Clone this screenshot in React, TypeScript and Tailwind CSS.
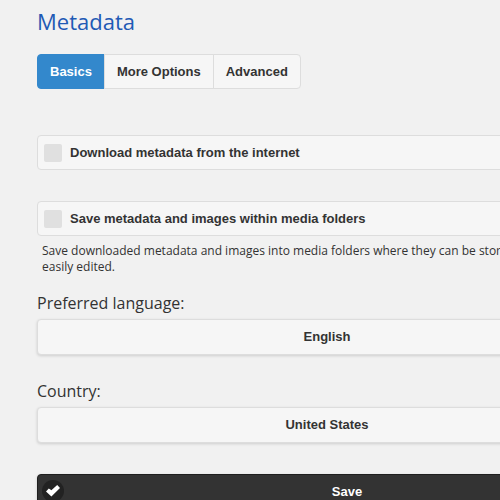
import React, { useState } from 'react';

const tabs = ['Basics', 'More Options', 'Advanced'];

const buttonFont = "font-['Liberation_Sans',Arial,sans-serif] text-[13px] font-bold";

interface CheckboxRowProps {
  id: string;
  label: string;
}

const CheckboxRow: React.FC<CheckboxRowProps> = ({ id, label }) => (
  <label
    htmlFor={id}
    className={`flex h-[35px] items-center gap-2 rounded border border-[#ddd] bg-[#f6f6f6] px-[6px] ${buttonFont}`}
  >
    <input
      id={id}
      type="checkbox"
      className="size-[18px] shrink-0 appearance-none rounded-[2px] bg-[#e0e0e0] checked:bg-[#3388cc]"
    />
    <span>{label}</span>
  </label>
);

interface SelectFieldProps {
  id: string;
  label: string;
  options: string[];
}

const SelectField: React.FC<SelectFieldProps> = ({ id, label, options }) => (
  <div>
    <label htmlFor={id} className="block pb-1 text-base leading-6">
      {label}
    </label>
    <select
      id={id}
      className={`block h-9 w-full appearance-none rounded border border-[#ddd] bg-[#f6f6f6] pr-10 text-center shadow-[0_1px_3px_rgba(0,0,0,0.15)] ${buttonFont}`}
    >
      {options.map(option => (
        <option key={option}>{option}</option>
      ))}
    </select>
  </div>
);

const App: React.FC = () => {
  const [activeTab, setActiveTab] = useState('Basics');

  return (
    <div className="h-screen overflow-hidden bg-[#f1f1f1] px-[37px] pt-[3px] font-['Open_Sans',sans-serif] text-[#333]">
      <h1 className="text-[22px] leading-9 text-[#1f5ab5]">Metadata</h1>

      <nav className="mt-[15px] flex">
        {tabs.map(tab => (
          <button
            key={tab}
            type="button"
            onClick={() => setActiveTab(tab)}
            className={`-ml-px h-[35px] border px-3 first:ml-0 first:rounded-l last:rounded-r ${buttonFont} ${
              activeTab === tab ? 'border-[#3388cc] bg-[#3388cc] text-white' : 'border-[#ddd] bg-[#f6f6f6]'
            }`}
          >
            {tab}
          </button>
        ))}
      </nav>

      <form className="min-w-[620px] pt-[46px]" onSubmit={e => e.preventDefault()}>
        <CheckboxRow id="download" label="Download metadata from the internet" />

        <div className="mt-[31px]">
          <CheckboxRow id="save-local" label="Save metadata and images within media folders" />
          <p className="pt-[7px] pr-28 pl-[5px] text-xs leading-4">
            Save downloaded metadata and images into media folders where they can be stored and easily edited.
          </p>
        </div>

        <div className="mt-4 space-y-6">
          <SelectField id="language" label="Preferred language:" options={['English', 'French', 'German']} />
          <SelectField id="country" label="Country:" options={['United States', 'Canada', 'Germany']} />
        </div>

        <button
          type="submit"
          className={`relative mt-[31px] h-9 w-full rounded border border-[#1f1f1f] bg-[#333] text-white shadow-[0_1px_3px_rgba(0,0,0,0.15)] ${buttonFont}`}
        >
          <span className="absolute top-[5px] left-1 flex size-[22px] items-center justify-center rounded-full bg-[#222]">
            <svg viewBox="0 0 14 14" className="size-[14px]" fill="#fff" aria-hidden="true">
              <path d="M14 4 11.2 1 5.4 6.2 2.8 4.6 0 7.6l5.4 5z" />
            </svg>
          </span>
          Save
        </button>
      </form>
    </div>
  );
};

export default App;
